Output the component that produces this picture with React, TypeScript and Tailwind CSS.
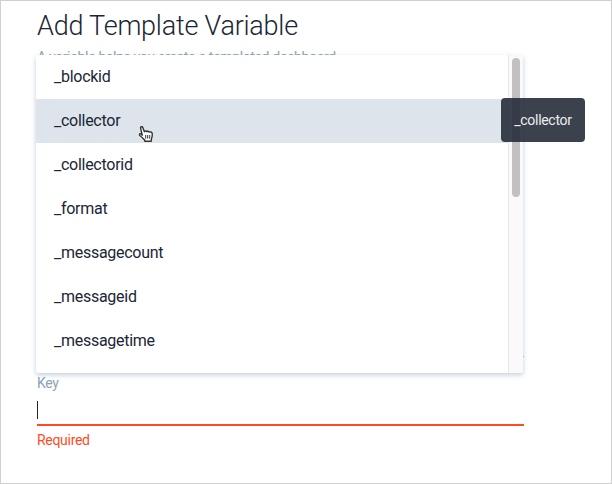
const OPTIONS = [
  '_blockid',
  '_collector',
  '_collectorid',
  '_format',
  '_messagecount',
  '_messageid',
  '_messagetime',
];

function HandCursor() {
  return (
    <svg
      className="ml-[18px] mt-[26px] self-start"
      width="17"
      height="18"
      viewBox="0 0 17 18"
      aria-hidden="true"
    >
      <path
        d="M4.2 10.2 2.6 3.1C2.3 1.8 4.2 1.1 4.8 2.4L6.4 6.7C6.9 5.7 8.3 5.8 8.8 6.7C9.5 5.9 10.8 6.2 11.2 7.1C12.1 6.5 13.9 7 14.2 8.4C14.5 10.2 14.2 12.3 13.4 14.1L13.2 16.2H6.9L6.5 14.8C5 13.3 3.9 12 2.3 11C.6 9.7 1.6 8.2 3.1 8.9Z"
        fill="white"
        stroke="#333333"
        strokeWidth="1.4"
        strokeLinejoin="round"
      />
      <path d="M7.7 10v3.6M9.7 10v3.6M11.7 10v3.6" stroke="#333333" strokeWidth="1" />
    </svg>
  );
}

function Tooltip({ text }: { text: string }) {
  return (
    <span className="absolute -right-[77px] -top-[0.5px] z-10 flex h-11 w-[84px] items-center justify-center rounded bg-[#262e3a]/90 text-sm tracking-[-0.3px] text-[#eceef0]">
      {text}
    </span>
  );
}

function OptionList() {
  return (
    <div className="z-10 col-start-1 row-start-1 -ml-px mr-px mt-[6.5px] flex h-[318.5px] rounded-[3px] bg-white shadow-[0_2px_5px_rgba(80,120,140,0.35)]">
      <ul className="flex min-w-0 flex-1 flex-col text-base tracking-[-0.27px] text-[#1b2635]">
        {OPTIONS.map((option) =>
          option === '_collector' ? (
            <li key={option} className="relative flex h-11 items-center bg-[#dde4eb] pl-[18px]">
              {option}
              <HandCursor />
              <Tooltip text={option} />
            </li>
          ) : (
            <li key={option} className="flex h-11 items-center pl-[18px]">
              {option}
            </li>
          ),
        )}
      </ul>
      <div className="flex w-[15px] items-start rounded-r-[3px] border-l border-[#e7e7e7] bg-[#fafafa] pl-[3px] pt-[3px]">
        <div className="h-[139px] w-2 rounded-full bg-[#c1c1c1]" />
      </div>
    </div>
  );
}

export default function App() {
  return (
    <main className="flex h-[484px] w-[612px] flex-col border border-[#d0d0d0] bg-white pl-9 font-['Roboto',sans-serif]">
      <h1 className="h-[47px] pt-[7px] text-[27px] font-light leading-9 tracking-[-0.22px] text-[#1b2635]">
        Add Template Variable
      </h1>
      <section className="flex w-[487px] flex-col">
        <div className="grid h-[325px] grid-cols-1">
          <div className="col-start-1 row-start-1 flex flex-col justify-between pb-4 pt-px text-sm leading-4 tracking-[-0.31px] text-[#8ea3b5]">
            <p>A variable helps you create a templated dashboard</p>
            <span className="size-px self-end bg-[#b8c2ca]" />
          </div>
          <OptionList />
        </div>
        <label className="flex h-[25px] pt-px text-sm leading-[18px] tracking-[-0.3px] text-[#8ea3b5]">
          Key
        </label>
        <div className="flex h-[28px] items-start border-b-2 border-[#ff4b22] pt-[3px]">
          <span className="h-[18px] w-px bg-[#1b2635]" />
        </div>
        <p className="pt-[5px] text-sm leading-[18px] tracking-[-0.3px] text-[#ff4b22]">Required</p>
      </section>
    </main>
  );
}
